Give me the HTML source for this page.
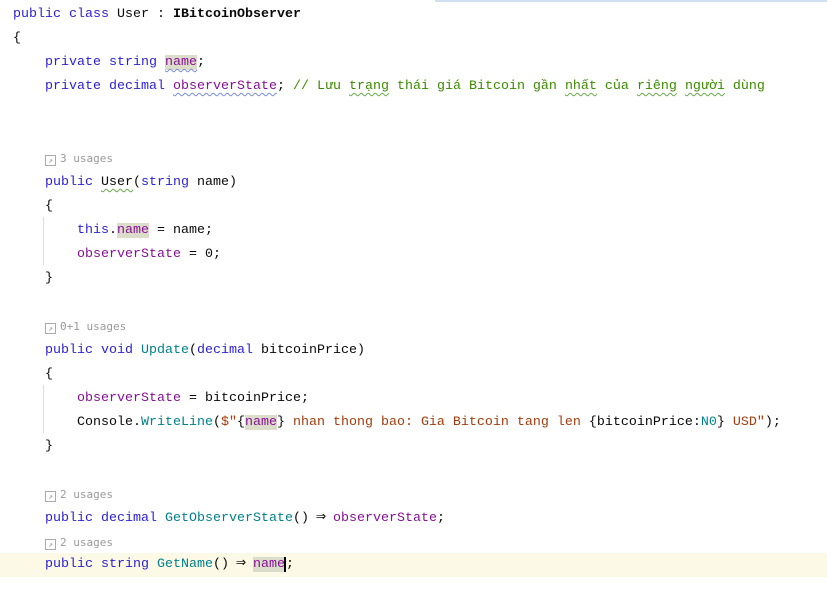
<!DOCTYPE html>
<html><head><meta charset="utf-8"><style>
body{margin:0;width:827px;height:599px;background:#fff;overflow:hidden;position:relative;font-family:"Liberation Mono","DejaVu Sans Mono",monospace;font-size:13.33px;color:#080808}
.l{position:absolute;left:13px;height:24px;line-height:24px;white-space:pre;margin-top:2px}
.k{color:#2b1fd0}.f{color:#871094}.m{color:#00808a}.s{color:#a33c0c}.c{color:#3c8a00}.b{font-weight:bold}
.h{background:#dcdccb}
.w{text-decoration:underline wavy;text-decoration-thickness:1px;text-underline-offset:3px}
.wb{text-decoration-color:#7a8cd6}.wg{text-decoration-color:#6aa84f}
.u{color:#999;font-size:11px;font-family:"DejaVu Sans Mono",monospace}
.u i{display:inline-block;width:9px;height:9px;border:1px solid #aaa;vertical-align:-1px;margin-right:4px;font-style:normal;font-size:8px;line-height:9px;text-align:center;color:#888}
.ar{display:inline-block;width:16px;margin:0 -4px;text-align:center;font-size:17px;line-height:10px}
.cur{position:absolute;left:0;top:553px;width:827px;height:24px;background:#fcfae6}
.g{position:absolute;left:43px;width:1px;background:#ddd}
</style></head><body>
<div style="position:absolute;left:435px;top:0;width:392px;height:2px;background:#cfe0f5"></div>
<div class="cur"></div>
<div class="g" style="top:217px;height:48px"></div>
<div class="g" style="top:385px;height:48px"></div>
<div class="l" style="top:1px"><span class="k">public class</span> User : <span class="b">IBitcoinObserver</span></div>
<div class="l" style="top:25px">{</div>
<div class="l" style="top:49px">    <span class="k">private string</span> <span class="f h w wb">name</span>;</div>
<div class="l" style="top:73px">    <span class="k">private decimal</span> <span class="f w wb">observerState</span>; <span class="c">// Lưu <span class="w wg">trạng</span> thái giá Bitcoin gần <span class="w wg">nhất</span> của <span class="w wg">riêng</span> <span class="w wg">người</span> dùng</span></div>
<div class="l u" style="top:145px;left:45px"><i>↗</i>3 usages</div>
<div class="l" style="top:169px">    <span class="k">public</span> <span class="w wg">User</span>(<span class="k">string</span> name)</div>
<div class="l" style="top:193px">    {</div>
<div class="l" style="top:217px">        <span class="k">this</span>.<span class="f h">name</span> = name;</div>
<div class="l" style="top:241px">        <span class="f">observerState</span> = 0;</div>
<div class="l" style="top:265px">    }</div>
<div class="l u" style="top:313px;left:45px"><i>↗</i>0+1 usages</div>
<div class="l" style="top:337px">    <span class="k">public void</span> <span class="m">Update</span>(<span class="k">decimal</span> bitcoinPrice)</div>
<div class="l" style="top:361px">    {</div>
<div class="l" style="top:385px">        <span class="f">observerState</span> = bitcoinPrice;</div>
<div class="l" style="top:409px">        Console.<span class="m">WriteLine</span>(<span class="s">$"</span>{<span class="f h">name</span>}<span class="s"> nhan thong bao: Gia Bitcoin tang len </span>{bitcoinPrice:<span class="m">N0</span>}<span class="s"> USD"</span>);</div>
<div class="l" style="top:433px">    }</div>
<div class="l u" style="top:481px;left:45px"><i>↗</i>2 usages</div>
<div class="l" style="top:505px">    <span class="k">public decimal</span> <span class="m">GetObserverState</span>() <span class="ar">⇒</span> <span class="f">observerState</span>;</div>
<div class="l u" style="top:529px;left:45px"><i>↗</i>2 usages</div>
<div class="l" style="top:551px">    <span class="k">public string</span> <span class="m">GetName</span>() <span class="ar">⇒</span> <span class="f h">name</span><span style="border-left:2px solid #000;margin-left:-1px">;</span></div>
</body></html>
